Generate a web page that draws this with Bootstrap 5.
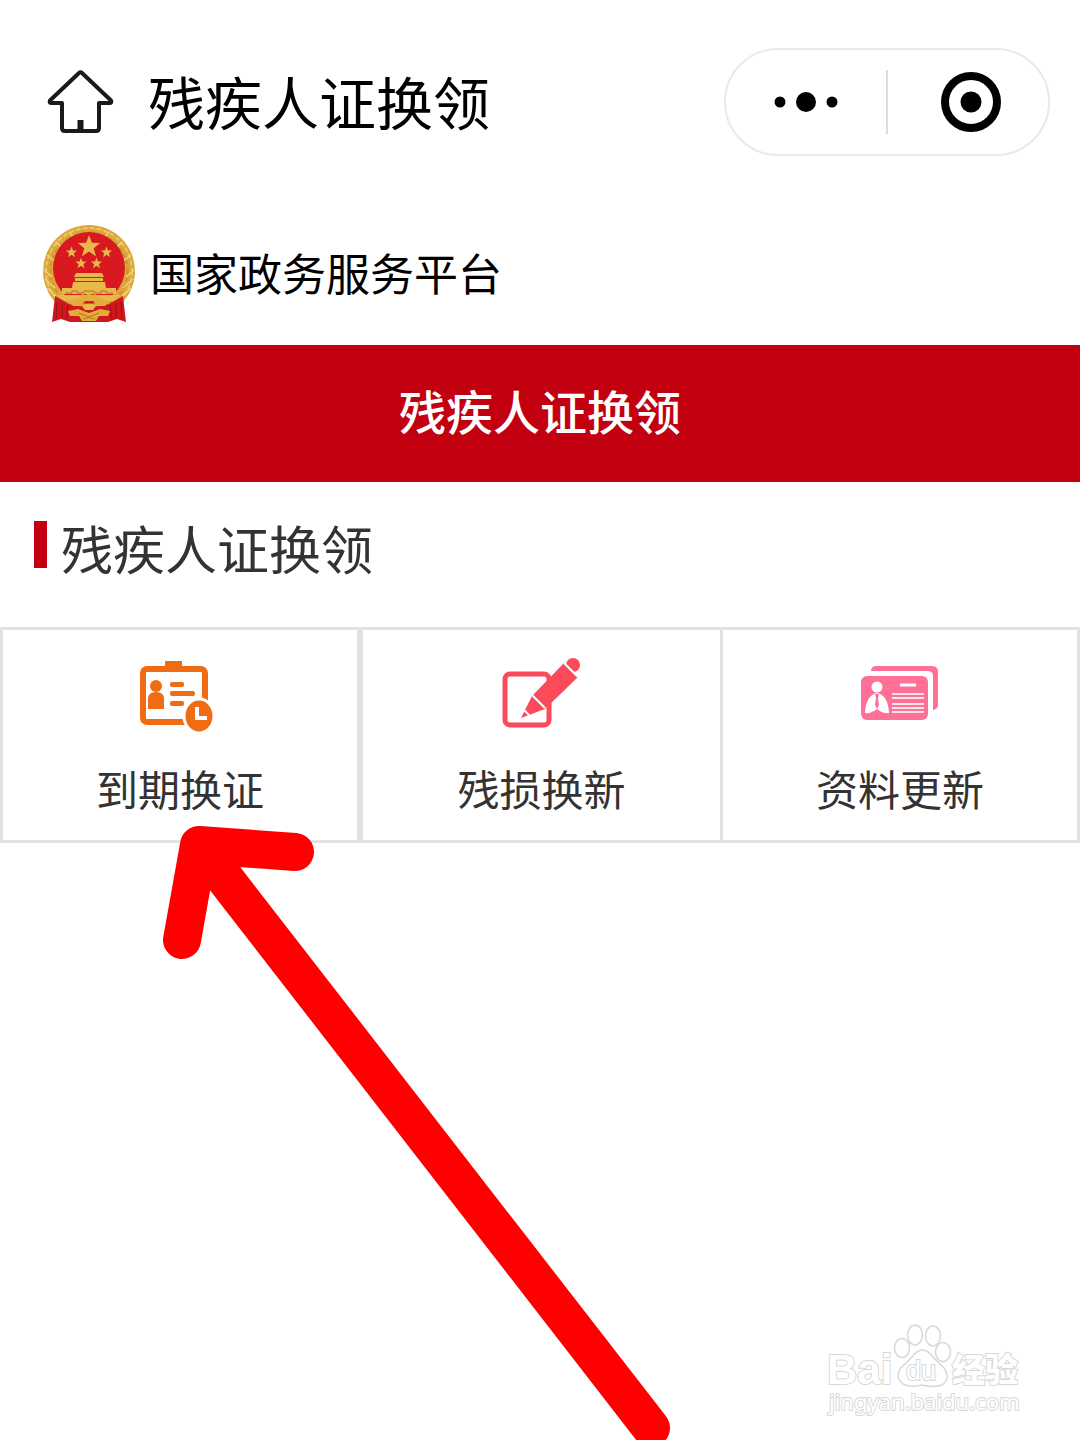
<!DOCTYPE html>
<html lang="zh-CN">
<head>
<meta charset="utf-8">
<meta name="viewport" content="width=device-width, initial-scale=1">
<title>残疾人证换领</title>
<link href="https://cdn.jsdelivr.net/npm/bootstrap@5.3.0/dist/css/bootstrap.min.css" rel="stylesheet">
<style>
  body { font-family: "Noto Sans CJK SC", sans-serif; background: #fff; color: #000; }
  .screen { min-height: 100vh; }
  .app-bar { padding: 48px 30px 48px 46px; }
  .app-title { font-size: 57px; line-height: 72px; padding-bottom: 4px; }
  .capsule { width: 326px; height: 108px; border: 2px solid #e9e9e9; }
  .capsule .btn { flex: 1 1 0; min-width: 0; }
  .capsule-line { width: 2px; height: 64px; background: #dcdcdc; }
  .brand-row { padding: 20px 42px; gap: 14px; }
  .brand-name { font-size: 44px; line-height: 60px; padding-bottom: 6px; }
  .banner { background: #c2000f; padding: 28px 0 36px; font-size: 47px; line-height: 73px; font-weight: 500; }
  .section-head { padding: 30px 34px 43px; gap: 14px; color: #333; }
  .section-head::before { content: ""; width: 13px; height: 47px; margin-bottom: 8px; background: #c2000f; }
  .section-name { font-size: 52px; line-height: 72px; }
  .tile-row { border: solid #e2e2e2; border-width: 3px 0; }
  .tile { border-left: 3px solid #e2e2e2; padding: 20px 0; gap: 12px; color: #333; font-size: 42px; line-height: 64px; }
  .tile:first-child, .tile:last-child { border-right: 3px solid #e2e2e2; }
  .arrow { pointer-events: none; }
  .watermark { right: 50px; bottom: 16px; }
  .watermark text { fill: #fff; stroke: #d8d8d8; paint-order: stroke; }
</style>
</head>
<body>
<div class="screen position-relative overflow-hidden">
  <header class="app-bar d-flex align-items-center justify-content-between">
    <div class="d-flex align-items-center">
      <a href="#" class="d-flex" aria-label="首页">
        <svg width="70" height="72" viewBox="0 0 70 72" fill="none" stroke="#1a1a1a" stroke-width="4" stroke-linejoin="round"><path d="M33 7Q34.500 5.500 36 7L65 34.500Q66 37 64 37H53V62Q53 65 50 65H19Q16 65 16 62V37H5Q3 37 4 34.500Z"/><path d="M34.500 54V65" stroke-width="6"/></svg>
      </a>
      <h1 class="app-title fw-normal mb-0 ms-3 ps-3">残疾人证换领</h1>
    </div>
    <div class="capsule rounded-pill d-flex align-items-center flex-shrink-0">
      <button type="button" class="btn border-0 p-0" aria-label="更多">
        <svg width="66" height="24" viewBox="0 0 66 24"><circle cx="7" cy="11" r="5.500"/><circle cx="33" cy="11" r="10"/><circle cx="59" cy="11" r="5.500"/></svg>
      </button>
      <span class="capsule-line"></span>
      <button type="button" class="btn border-0 p-0" aria-label="关闭">
        <svg width="72" height="64" viewBox="0 0 72 64"><circle cx="39" cy="32" r="26" fill="none" stroke="#000" stroke-width="8"/><circle cx="39" cy="32" r="10.500"/></svg>
      </button>
    </div>
  </header>

  <div class="brand-row d-flex align-items-center">
    <svg width="94" height="101" viewBox="0 0 94 101" role="img" aria-label="国徽">
      <circle cx="47" cy="47" r="46" fill="#dca63a"/>
      <circle cx="47" cy="47" r="43" fill="none" stroke="#ebc566" stroke-width="2" stroke-dasharray="5 2"/>
      <circle cx="47" cy="47" r="38.500" fill="none" stroke="#cc932d" stroke-width="2" stroke-dasharray="4 3"/>
      <path d="M5 64l9 8M3 55l10 9M1 45l9 8M93 45l-9 8M91 55l-10 9M89 64l-9 8M5 31l8 6M89 31l-8 6M14 18l6 6M80 18l-6 6M27 8l5 6M67 8l-5 6" stroke="#f2d27c" stroke-width="1.500"/>
      <circle cx="47" cy="44" r="36" fill="#d8191f"/>
      <g fill="#e8b84a">
        <path id="star" d="M47 11l2.900 7.800 8.300.300-6.500 5.200 2.300 8-7-4.700-7 4.700 2.300-8-6.500-5.200 8.300-.300z"/>
        <use href="#star" transform="translate(6 17) scale(.5)"/>
        <use href="#star" transform="translate(41 17) scale(.5)"/>
        <use href="#star" transform="translate(15.500 28) scale(.5)"/>
        <use href="#star" transform="translate(31 28) scale(.5)"/>
        <path d="M34 49h26l2 4H32zM33 54h28v3H33zM31 58h32l1 6H30zM20 64h54v6H20z"/>
        <path d="M15 71h64l-7 6H22z"/>
      </g>
      <path d="M23 69h7v-2h5v2h7v-2h10v2h7v-2h5v2h7" fill="none" stroke="#b27718"/>
      <path d="M13 72L27 80Q37 84 47 81Q57 84 67 80L81 72L84 98L75 95L66 98H28L19 95L10 98Z" fill="#cf171d"/>
      <path d="M15 78l-1 17M20 79v15M26 81l-2 15M68 81l2 15M74 79v15M79 78l1 17" stroke="#98101a" fill="none"/>
      <path d="M27 77L37 74 40 70 44 71 47 68 50 71 54 70 57 74 67 77 63 82H55Q52 76 47 76T39 82H31Z" fill="#e2ad3d"/>
      <path d="M40 82Q47 77 54 82L51 86H43Z" fill="#e8b84a"/>
      <path d="M26 87L36 85 47 89 58 85 68 87 66 92 57 92 54 97H40L37 92 28 92Z" fill="#e2ad3d"/>
      <path d="M37 89l10 4 10-4M41 95q6-3 12 0" fill="none" stroke="#b27718"/>
    </svg>
    <div class="brand-name">国家政务服务平台</div>
  </div>

  <div class="banner text-white text-center">残疾人证换领</div>

  <main>
    <div class="section-head d-flex align-items-center">
      <h2 class="section-name fw-normal mb-0">残疾人证换领</h2>
    </div>
    <nav class="tile-row row g-0">
      <a href="#" class="tile col-4 d-flex flex-column align-items-center text-decoration-none">
        <svg width="86" height="94" viewBox="0 0 86 94">
          <path d="M28 11h17v5H28z" fill="#ef6b14"/>
          <rect x="6" y="19" width="62" height="53" rx="4" fill="none" stroke="#ef6b14" stroke-width="6"/>
          <g fill="#ef6b14"><circle cx="19" cy="36" r="6"/><path d="M11 59V49q0-7 8-7t8 7v10z"/><rect x="33" y="32" width="14" height="5" rx="2"/><rect x="33" y="41" width="25" height="5" rx="2"/><rect x="33" y="51" width="14" height="5" rx="2"/></g>
          <ellipse cx="62" cy="66" rx="15" ry="17" fill="#ef6b14" stroke="#fff" stroke-width="3"/>
          <path d="M60 57v11h10" fill="none" stroke="#fff" stroke-width="4"/>
        </svg>
        <span>到期换证</span>
      </a>
      <a href="#" class="tile col-4 d-flex flex-column align-items-center text-decoration-none">
        <svg width="86" height="94" viewBox="0 0 86 94">
          <rect x="6" y="24" width="44" height="51" rx="5" fill="none" stroke="#fb4b5b" stroke-width="5"/>
          <path d="M22 68L33 46 65 13 79 27 46 59Z" fill="#fb4b5b"/>
          <circle cx="74" cy="15" r="7" fill="#fb4b5b"/>
          <path d="M33 45l13 13M65 13l14 14M25 60l5 5" stroke="#fff" stroke-width="2"/>
        </svg>
        <span>残损换新</span>
      </a>
      <a href="#" class="tile col-4 d-flex flex-column align-items-center text-decoration-none">
        <svg width="86" height="94" viewBox="0 0 86 94">
          <path d="M14 20q1-4 5-4h56q6 0 6 6v33q0 4-5 5V26q0-5-5-5H14z" fill="#ff7097"/>
          <rect x="4" y="26" width="67" height="44" rx="6" fill="#ff7097"/>
          <circle cx="20" cy="37" r="5.500" fill="#fff"/>
          <path d="M8 63Q9 45 20 43Q31 45 32 63Q26 64 20 59Q14 64 8 63Z" fill="#fff"/>
          <path d="M18 44h4l-1 4 1 7-2 4-2-4 1-7z" fill="#ff7097"/>
          <path d="M43 35h16" stroke="#fff" stroke-width="3"/>
          <path d="M35 44h32M35 48h32M35 54h32M35 58h32M35 62h32" stroke="#fff" stroke-width="2" opacity=".8"/>
        </svg>
        <span>资料更新</span>
      </a>
    </nav>
  </main>

  <svg class="arrow position-absolute top-0 start-0" width="1080" height="1440" viewBox="0 0 1080 1440" fill="none" stroke="#f00" stroke-width="38" stroke-linecap="round" stroke-linejoin="round" aria-hidden="true">
    <path d="M295 852L199 845L182 940M199 845L651 1428"/>
  </svg>

  <svg class="watermark position-absolute" width="210" height="104" viewBox="0 0 210 104" role="img" aria-label="Baidu 经验">
    <g fill="#fff" stroke="#d8d8d8" stroke-width="1.500">
      <ellipse cx="82" cy="28" rx="7.500" ry="9.500"/><ellipse cx="95" cy="15" rx="7.500" ry="10"/><ellipse cx="113" cy="16" rx="7.500" ry="10"/><ellipse cx="123" cy="32" rx="7.500" ry="9.500"/>
      <path d="M102 30Q108 30 113 37L124 48Q131 59 122 65Q115 68 102 65Q90 68 83 64Q75 58 80 49L92 37Q97 30 102 30Z"/>
    </g>
    <text x="7" y="64" font-family="Liberation Sans, sans-serif" font-weight="700" font-size="42" stroke-width="2">Bai</text>
    <text x="86" y="60" font-family="Liberation Sans, sans-serif" font-size="27" stroke-width="2">du</text>
    <text x="132" y="62" font-family="Noto Sans CJK SC, sans-serif" font-weight="900" font-size="33" stroke-width="2">经验</text>
    <text x="9" y="90" font-family="Noto Sans, sans-serif" font-size="22" stroke-width="2">jingyan.baidu.com</text>
  </svg>
</div>
<script src="https://cdn.jsdelivr.net/npm/bootstrap@5.3.0/dist/js/bootstrap.bundle.min.js"></script>
</body>
</html>
